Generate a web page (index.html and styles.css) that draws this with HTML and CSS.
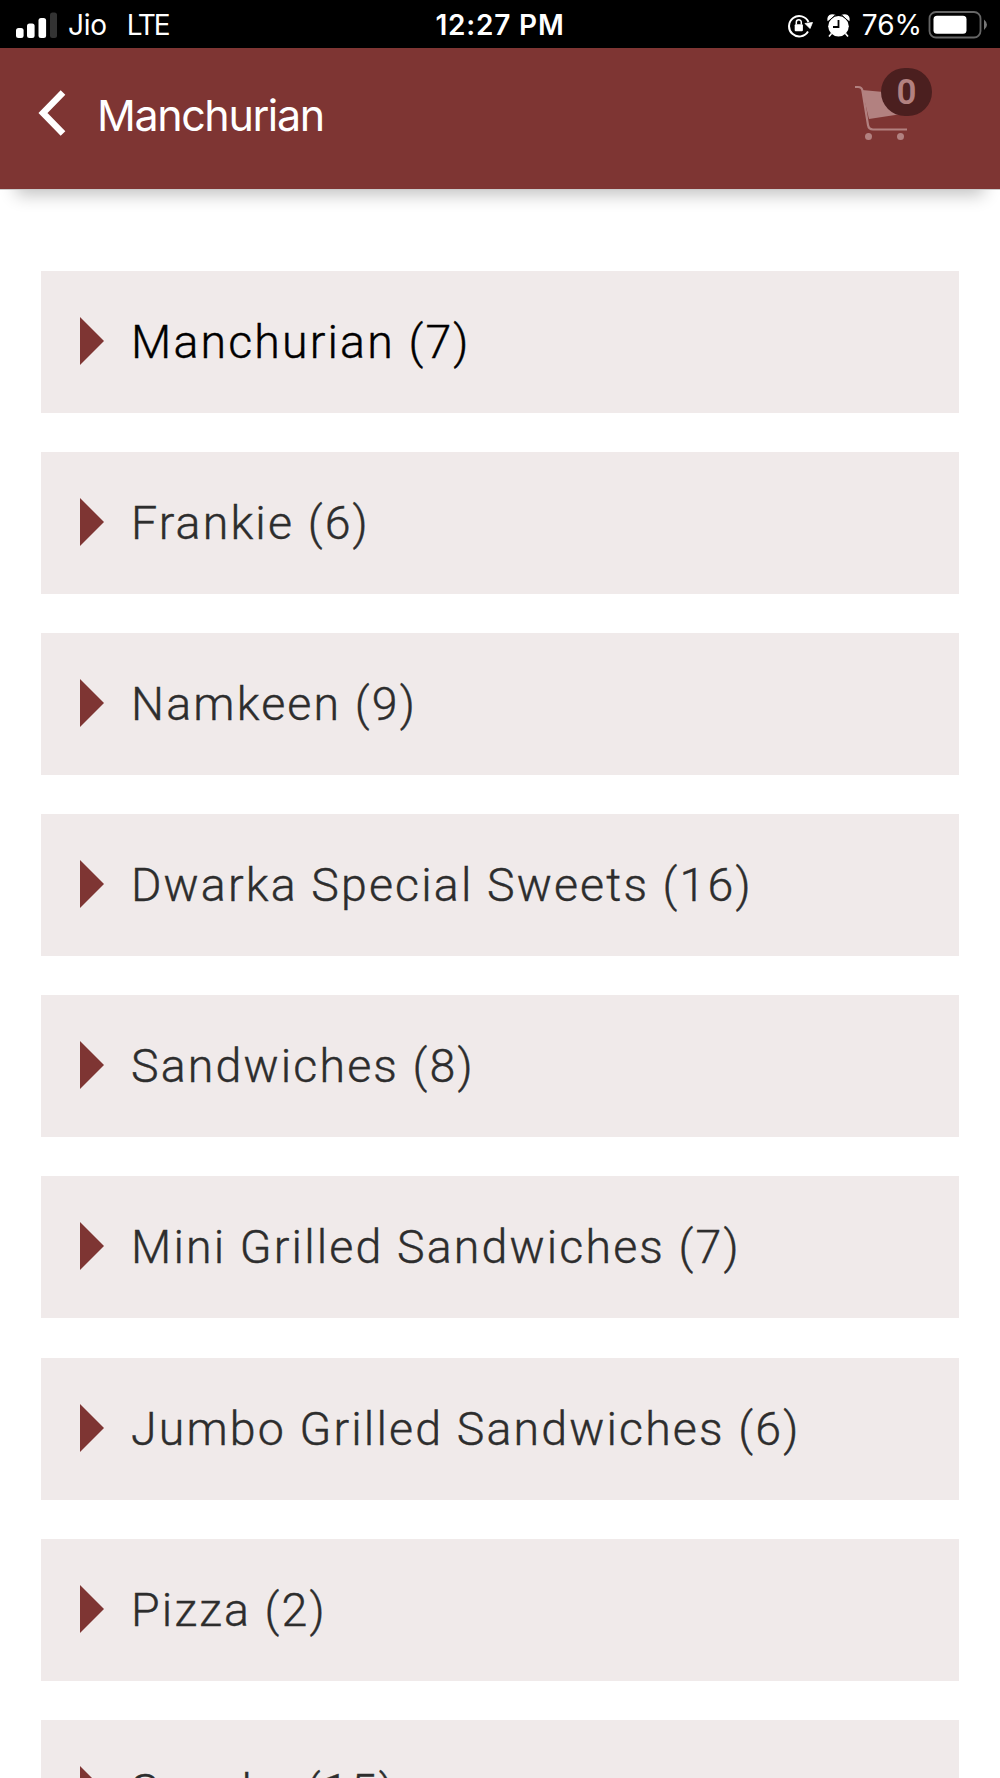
FILE: index.html
```html
<!DOCTYPE html>
<html lang="en">
<head>
  <meta charset="UTF-8" />
  <meta name="viewport" content="width=device-width, initial-scale=1" />
  <title>Manchurian</title>
  <link rel="stylesheet" href="styles.css">
</head>
<body>
  <div class="status-bar">
    <div class="status-left">
      <svg class="signal" width="42" height="26" viewBox="0 0 42 26">
        <rect x="0" y="16" width="7.6" height="10" rx="2.5" fill="#fff" />
        <rect x="11" y="11.5" width="7.6" height="14.5" rx="2.5" fill="#fff" />
        <rect x="22.5" y="6" width="7.6" height="20" rx="2.5" fill="#fff" />
        <rect x="34" y="0.5" width="7" height="25.5" rx="2.5" fill="#333" />
      </svg>
      <span class="carrier">Jio</span>
      <span class="network">LTE</span>
    </div>
    <div class="time">12:27 PM</div>
    <div class="status-right">
      <svg class="lock" width="26" height="24" viewBox="0 0 26 24">
        <path d="M21 17.5A10.2 10.2 0 1 1 21.5 8" fill="none" stroke="#fff" stroke-width="2" />
        <path d="M18 9.5L25.5 8.5l-2.5 6z" fill="#fff" stroke="#fff" stroke-width="0.8" />
        <rect x="7.7" y="10.2" width="8.2" height="7" rx="1" fill="#fff" />
        <path d="M9.3 10.5V8.2a2.5 2.5 0 0 1 5 0v2.3" fill="none" stroke="#fff" stroke-width="1.5" />
      </svg>
      <svg class="alarm" width="24" height="24" viewBox="0 0 24 24">
        <circle cx="11.5" cy="12.3" r="10.3" fill="#fff" />
        <path d="M1.2 5.7C.7 2 4 .2 7 1.3zM21.8 5.7C22.3 2 19 .2 16 1.3zM4.5 19.5l-2.5 3M18.5 19.5l2.5 3" fill="#fff" stroke="#fff" stroke-width="1.6" />
        <path d="M1.5 7.5L8 1.3M21.5 7.5L15 1.3" stroke="#000" stroke-width="1" />
        <path d="M11.5 6v7H6" fill="none" stroke="#000" stroke-width="1.8" />
      </svg>
      <span class="percent">76%</span>
      <svg class="battery" width="60" height="28" viewBox="0 0 60 28">
        <rect x="1.5" y="1" width="51" height="25.5" rx="6.5" fill="none" stroke="#666" stroke-width="1.8" />
        <rect x="5.5" y="4.8" width="33" height="18" rx="3.5" fill="#fff" />
        <path d="M56 8.5q6 5.2 0 10.5z" fill="#777" />
      </svg>
    </div>
  </div>

  <header class="header">
    <svg class="back" width="28" height="46" viewBox="0 0 28 46">
      <path d="M25 2.5L5 23l20 20.5" fill="none" stroke="#fff" stroke-width="6.5" />
    </svg>
    <h1 class="title">Manchurian</h1>
    <div class="cart">
      <svg width="54" height="56" viewBox="0 0 54 56">
        <path d="M0 2h3q4 0 4.5 4L13 40q.7 4.5 5 4.5h34" fill="none" stroke="#b28180" stroke-width="2.2" />
        <path d="M7 5L50 9v19.4L14 34z" fill="#b28180" />
        <circle cx="13.5" cy="51.5" r="3.5" fill="#b28180" />
        <circle cx="45.5" cy="51.5" r="3.5" fill="#b28180" />
      </svg>
      <span class="badge">0</span>
    </div>
  </header>

  <main class="menu">
    <div class="item active"><span class="arrow"></span>Manchurian (7)</div>
    <div class="item"><span class="arrow"></span>Frankie (6)</div>
    <div class="item"><span class="arrow"></span>Namkeen (9)</div>
    <div class="item"><span class="arrow"></span>Dwarka Special Sweets (16)</div>
    <div class="item"><span class="arrow"></span>Sandwiches (8)</div>
    <div class="item"><span class="arrow"></span>Mini Grilled Sandwiches (7)</div>
    <div class="item"><span class="arrow"></span>Jumbo Grilled Sandwiches (6)</div>
    <div class="item"><span class="arrow"></span>Pizza (2)</div>
    <div class="item"><span class="arrow"></span>Snacks (15)</div>
  </main>
</body>
</html>
```
FILE: styles.css
```css
body {
  margin: 0;
  height: 1778px;
  overflow: hidden;
  background: #fff;
  font-family: Roboto, sans-serif;
}
.status-bar {
  display: grid;
  grid-template-columns: 1fr auto 1fr;
  align-items: center;
  height: 48px;
  padding: 3px 12px 0 16px;
  box-sizing: border-box;
  background: #000;
  color: #fff;
  font-family: Inter, sans-serif;
  font-size: 28px;
  line-height: 45px;
}
.status-left,
.status-right {
  display: flex;
  align-items: center;
}
.status-right {
  justify-content: flex-end;
}
.carrier {
  margin-left: 10px;
  letter-spacing: -0.3px;
}
.network {
  margin-left: 20px;
  letter-spacing: -2px;
}
.time {
  margin-right: 4px;
  font-weight: 600;
  letter-spacing: 0.8px;
}
.lock,
.alarm {
  margin-left: 14px;
}
.percent {
  margin: 0 6px 0 11px;
}
.signal,
.battery {
  margin-top: -2px;
}
.header {
  display: flex;
  align-items: center;
  height: 141px;
  padding: 0 68px 0 38px;
  box-sizing: border-box;
  background: #7e3533;
  box-shadow: 0 1px 0 #ccc, 0 22px 16px -16px rgba(0, 0, 0, 0.24);
}
.back {
  margin-top: -11px;
}
.title {
  margin: -8px auto 0 31px;
  color: #fff;
  font-family: Inter, sans-serif;
  font-size: 43px;
  font-weight: 400;
  letter-spacing: -1.4px;
  line-height: 50px;
}
.cart {
  position: relative;
  width: 77px;
  height: 56px;
  margin-top: -11px;
}
.badge {
  position: absolute;
  top: -17px;
  right: 0;
  width: 51px;
  height: 48px;
  border-radius: 25px;
  background: #4b1f1f;
  color: #b28180;
  font-size: 35px;
  font-weight: 600;
  line-height: 49px;
  text-align: center;
}
.menu {
  display: flex;
  flex-direction: column;
  gap: 39.15px;
  padding: 81.7px 41px 0;
}
.item {
  display: flex;
  align-items: center;
  height: 142px;
  padding-left: 39px;
  box-sizing: border-box;
  background: #f0eaea;
  color: #2d2d2d;
  font-size: 46.5px;
  font-weight: 300;
  letter-spacing: 2.15px;
  line-height: 54px;
  -webkit-text-stroke: 0.4px;
}
.active {
  color: #000;
}
.arrow {
  margin: -2px 27px 0 0;
  border-left: 24px solid #7e3533;
  border-top: 24px solid transparent;
  border-bottom: 24px solid transparent;
}
```
